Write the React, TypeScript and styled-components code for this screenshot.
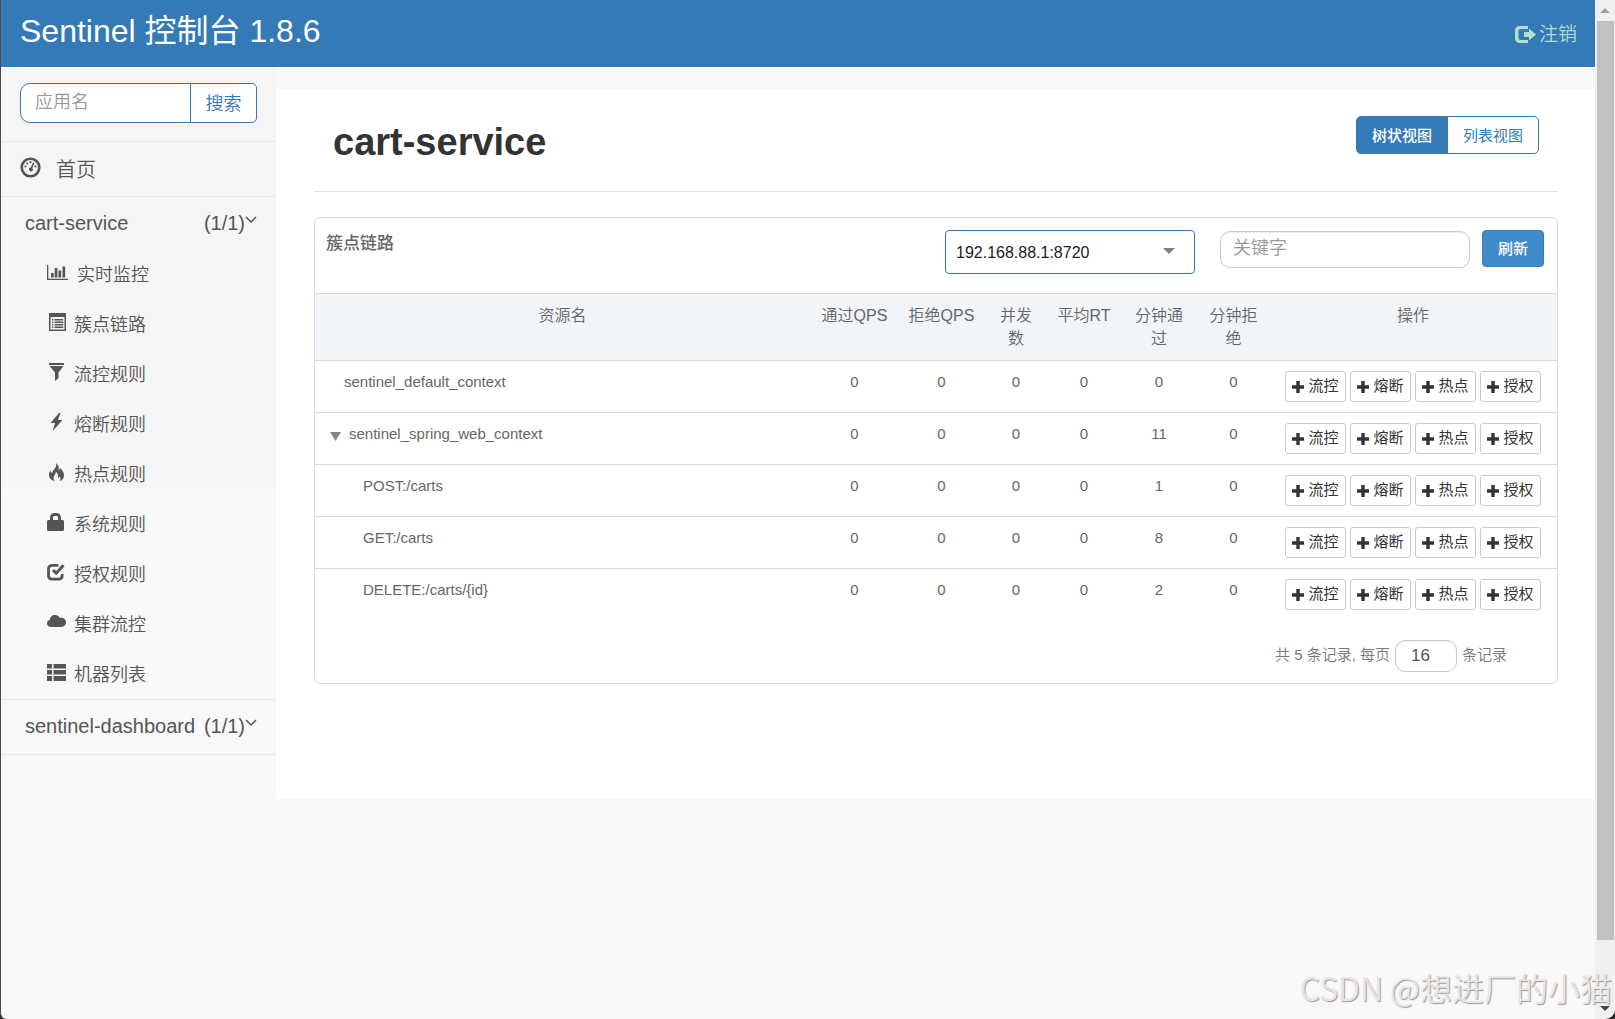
import React from 'react';
import styled, { createGlobalStyle } from 'styled-components';

const GlobalStyle = createGlobalStyle`
  *, *::before, *::after { box-sizing: border-box; }
  html { background: #2b2b2b; }
  body {
    margin: 0;
    font-family: "Liberation Sans", "Noto Sans CJK SC", sans-serif;
    font-weight: 350;
    color: #555;
  }
  button, input, select { font: inherit; color: inherit; margin: 0; }
  a { color: inherit; text-decoration: none; }
  ul { list-style: none; margin: 0; padding: 0; }
`;

/* ---------- frame ---------- */

const Frame = styled.div`
  position: relative;
  display: grid;
  grid-template-columns: minmax(0, 1fr) 20px;
  min-height: 100vh;
  border-left: 1px solid #4a4a4a;
  border-radius: 0 0 10px 6px;
  overflow: hidden;
  background: #f8f8f8;
`;

const ScrollTrack = styled.div`
  display: flex;
  flex-direction: column;
  align-items: center;
  background: #f0f0f0;
`;

const ScrollArrow = styled.span<{ $down?: boolean }>`
  display: flex;
  align-items: center;
  justify-content: center;
  height: 21px;
  &::before {
    content: "";
    border: 5px solid transparent;
    border-top: ${p => (p.$down ? '5px solid #444' : '0')};
    border-bottom: ${p => (p.$down ? '0' : '5px solid #a0a0a0')};
  }
`;

const ScrollThumb = styled.span`
  width: 17px;
  flex: 919;
  background: #c1c1c1;
`;

const ScrollRest = styled.span`
  flex: 58;
`;

const Watermark = styled.p`
  position: absolute;
  right: 3px;
  bottom: 8px;
  margin: 0;
  font-family: "Noto Sans CJK SC", sans-serif;
  font-size: 32px;
  line-height: 48px;
  color: #e6e6e6;
  text-shadow: 1px 1px 1px #999;
  white-space: nowrap;
  pointer-events: none;
`;

/* ---------- top bar ---------- */

const TopBar = styled.header`
  display: flex;
  justify-content: space-between;
  height: 67px;
  padding: 0 18px 0 19px;
  background: #337ab7;
`;

const Brand = styled.a`
  font-size: 32px;
  line-height: 62px;
  color: #fff;
  font-weight: 400;
`;

const Logout = styled.a`
  display: flex;
  align-items: center;
  gap: 3px;
  padding-top: 3px;
  font-size: 19px;
  line-height: 64px;
  color: #b2dfcb;
`;

/* ---------- sidebar ---------- */

const Columns = styled.div`
  display: grid;
  grid-template-columns: 275px minmax(0, 1fr);
  align-items: start;
`;

const Sidebar = styled.nav`
  background: linear-gradient(#f5f5f5 422px, #f8f8f8 422px);
`;

const SearchForm = styled.form`
  display: flex;
  padding: 16px 19px 18px;
  border-bottom: 1px solid #e7e7e7;
  font-size: 18px;
`;

const AppInput = styled.input`
  flex: 1;
  min-width: 0;
  height: 40px;
  padding: 0 14px 2px;
  border: 1px solid #337ab7;
  border-radius: 10px 0 0 10px;
  background: #fff;
  outline: 0;
  &::placeholder { color: #999; opacity: 1; }
`;

const SearchButton = styled.button`
  width: 67px;
  height: 40px;
  margin-left: -1px;
  padding: 0 0 3px;
  border: 1px solid #337ab7;
  border-radius: 0 5px 5px 0;
  background: #fff;
  color: #337ab7;
`;

const HomeLink = styled.a`
  display: flex;
  align-items: center;
  gap: 15px;
  height: 55px;
  padding: 0 0 2px 19px;
  border-bottom: 1px solid #e7e7e7;
  font-size: 20px;
`;

const AppRow = styled.a`
  display: flex;
  align-items: center;
  height: 54px;
  padding: 0 19px 2px 24px;
  font-size: 20px;
`;

const AppCount = styled.span`
  margin-left: auto;
`;

const Group = styled.section`
  border-bottom: 1px solid #e7e7e7;
`;

const MenuList = styled.ul`
  margin-top: -2px;
`;

const MenuLink = styled.a`
  display: flex;
  align-items: center;
  gap: 8px;
  height: 50px;
  padding: 0 0 2px 46px;
  font-size: 18px;
  svg { flex: none; margin-bottom: 3px; }
`;

/* ---------- content ---------- */

const Content = styled.main`
  margin-top: 22px;
  min-height: 710px;
  padding: 0 37px 0 38px;
  background: #fff;
`;

const Heading = styled.div`
  display: flex;
  justify-content: space-between;
  align-items: flex-start;
  padding: 27px 19px 23px;
  border-bottom: 1px solid #e3e3e3;
`;

const Title = styled.h1`
  margin: 0;
  font-size: 38px;
  line-height: 52px;
  font-weight: 700;
  color: #333;
`;

const ViewSwitch = styled.div`
  display: flex;
`;

const ViewButton = styled.button<{ $active?: boolean }>`
  width: 92px;
  height: 38px;
  margin-left: ${p => (p.$active ? '0' : '-1px')};
  padding: 0 0 2px;
  border: 1px solid #337ab7;
  border-radius: ${p => (p.$active ? '5px 0 0 5px' : '0 5px 5px 0')};
  background: ${p => (p.$active ? '#337ab7' : '#fff')};
  color: ${p => (p.$active ? '#fff' : '#337ab7')};
  font-weight: ${p => (p.$active ? 500 : 400)};
  font-size: 15px;
`;

const Card = styled.section`
  margin-top: 25px;
  border: 1px solid #d9d9d9;
  border-radius: 6px;
`;

const CardHead = styled.div`
  display: flex;
  align-items: flex-start;
  height: 75px;
  padding: 12px 13px 0 11px;
`;

const CardTitle = styled.h2`
  margin: 0 auto 0 0;
  font-size: 17px;
  line-height: 27px;
  font-weight: 500;
  color: #666;
`;

const SelectBox = styled.label`
  position: relative;
  margin-right: 25px;
  &::after {
    content: "";
    position: absolute;
    right: 20px;
    top: 18px;
    border: 6px solid transparent;
    border-top-color: #808080;
    border-bottom: 0;
    pointer-events: none;
  }
`;

const MachineSelect = styled.select`
  appearance: none;
  display: block;
  width: 250px;
  height: 44px;
  padding: 0 10px;
  border: 1px solid #337ab7;
  border-radius: 4px;
  background: #fff;
  font-size: 16px;
  color: #222;
`;

const KeywordInput = styled.input`
  width: 250px;
  height: 37px;
  margin: 1px 12px 0 0;
  padding: 0 12px 2px;
  border: 1px solid #ccc;
  border-radius: 10px;
  box-shadow: inset 0 1px 1px rgba(0, 0, 0, 0.075);
  background: #fff;
  font-size: 18px;
  outline: 0;
  &::placeholder { color: #999; opacity: 1; }
`;

const RefreshButton = styled.button`
  width: 62px;
  height: 37px;
  padding: 0 0 2px;
  border: 1px solid #357ebd;
  border-radius: 4px;
  background: #428bca;
  color: #fff;
  font-size: 15px;
  font-weight: 500;
`;

const Table = styled.table`
  width: 100%;
  table-layout: fixed;
  border-collapse: separate;
  border-spacing: 0;
  color: #666;
`;

const Th = styled.th<{ $width?: number; $oneLine?: boolean }>`
  width: ${p => (p.$width ? `${p.$width}px` : 'auto')};
  padding: 10px ${p => (p.$oneLine ? '0' : '10px')};
  border-top: 1px solid #d9d9d9;
  background: #f1f4f8;
  font-size: 16px;
  line-height: 23px;
  font-weight: 350;
  text-align: center;
  vertical-align: top;
  white-space: ${p => (p.$oneLine ? 'nowrap' : 'normal')};
`;

const Td = styled.td`
  padding: 10px 0;
  border-top: 1px solid #d9d9d9;
  font-size: 15px;
  line-height: 22px;
  text-align: center;
  vertical-align: top;
`;

const NameCell = styled(Td)<{ $indent: number }>`
  padding-left: ${p => p.$indent}px;
  text-align: left;
`;

const TreeToggle = styled.button`
  display: inline-block;
  width: 11px;
  height: 9px;
  margin-right: 8px;
  padding: 0;
  border: 0;
  background: #888;
  clip-path: polygon(0 0, 100% 0, 50% 100%);
  vertical-align: -2px;
`;

const Actions = styled.div`
  display: flex;
  justify-content: flex-end;
  gap: 4px;
  padding-right: 16px;
`;

const ActionButton = styled.button`
  display: flex;
  align-items: center;
  justify-content: center;
  gap: 4px;
  width: 61px;
  height: 31px;
  padding: 0;
  border: 1px solid #ccc;
  border-radius: 3px;
  background: #fff;
  color: #333;
  font-size: 15px;
  font-weight: 400;
`;

const ActionLabel = styled.span`
  padding-bottom: 1px;
`;

const Pager = styled.div`
  display: flex;
  justify-content: flex-end;
  align-items: center;
  gap: 5px;
  padding: 20px 50px 11px 0;
  font-size: 15px;
  line-height: 30px;
  color: #777;
`;

const PagerText = styled.span`
  height: 32px;
`;

const PageSize = styled.input`
  width: 62px;
  height: 32px;
  padding: 0 15px;
  border: 1px solid #ccc;
  border-radius: 10px;
  box-shadow: inset 0 1px 1px rgba(0, 0, 0, 0.075);
  background: #fff;
  font-size: 17px;
  color: #555;
  outline: 0;
`;

/* ---------- icons ---------- */

const icons: Record<string, React.ReactNode> = {
  list: (
    <path fillRule="evenodd" d="M2 0h17v18H2zM3.500 4v12.500h14V4zM5 6h1.300v1.500H5zM7.500 6h8.700v1.500H7.500zM5 8.500h1.300V10H5zM7.500 8.500h8.700V10H7.500zM5 11h1.300v1.500H5zM7.500 11h8.700v1.500H7.500zM5 13.500h1.300V15H5zM7.500 13.500h8.700V15H7.500z" />
  ),
  filter: <path d="M2 0h15v2H2zM2.500 3h14L11.500 9.500V15l-3.500 3V9.500z" />,
  flash: <path d="M12 0 3.500 10h4.600L5.700 18l9.800-11h-4.600L13.500 0z" />,
  fire: (
    <path d="M9 0c2.600 2.200 3.400 4.600 2.500 7.300.9-.4 1.300-1.200 1.400-2.300 2.400 2 4.100 4.400 4.100 7.400 0 2.700-1.500 4.600-4.300 5.600 1-1.600 1.100-3.200 0-4.800-.3 1.200-.8 1.700-1.700 2 .5-2.800-.2-5-2.100-6.400-.1 2.500-2.300 3.900-2.300 6.200 0 1.100.3 2 1 3C4.400 17.200 2 15.200 2 12.200c0-2 .6-3.500 1.600-5 .2 1.700.7 2.500 1.600 3C5.500 6.500 10.500 5 9 0z" />
  ),
  lock: (
    <path fillRule="evenodd" d="M3 7V4.500C3 2 5 0 7.500 0h2C12 0 14 2 14 4.500V7h1.500c.8 0 1.500.6 1.500 1.400v8.100c0 .9-.7 1.500-1.500 1.500h-14C.7 18 0 17.400 0 16.500V8.400C0 7.600.7 7 1.500 7zm3 0h5V4.500C11 3.600 10.400 3 9.500 3h-2C6.600 3 6 3.600 6 4.500z" />
  ),
  check: (
    <>
      <path fill="none" stroke="currentColor" strokeWidth="2.800" d="M11.500 2.400H5.200C3 2.400 1.500 3.800 1.500 6v6.500c0 2.200 1.500 3.600 3.700 3.600h6.300c2.200 0 3.700-1.400 3.700-3.600V11" />
      <path fill="none" stroke="currentColor" strokeWidth="3" d="m6 7 3.200 3.200L16.500 2.300" />
    </>
  ),
  cloud: (
    <path d="M4 14c-2.300 0-4-1.500-4-3.600 0-2 1.300-3.300 3-3.700C3 4.100 5.200 2 8 2c2.200 0 4 1.200 4.800 3 .5-.2.900-.3 1.400-.3C16.800 4.700 19 6.700 19 9.300S17 14 14.400 14z" />
  ),
  rows: <path d="M0 1h5v4.500H0zM6.500 1H19v4.500H6.500zM0 7h5v4.500H0zM6.500 7H19v4.500H6.500zM0 13h5v5H0zM6.500 13H19v5H6.500z" />,
};

function MenuIcon({ name }: { name: string }) {
  if (name === 'chart') {
    return (
      <svg width="22" height="18" viewBox="0 0 22 18" fill="currentColor" aria-hidden="true">
        <path d="M0 2h1.300v13.700H21V17H0zM4 10h2.700v4.500H4zM7.700 5h2.700v9.500H7.700zM11.500 7.500h2.700v7h-2.700zM15.500 3.500h2.700v11h-2.700z" />
      </svg>
    );
  }
  return (
    <svg width="19" height="18" viewBox="0 0 19 18" fill="currentColor" aria-hidden="true">
      {icons[name]}
    </svg>
  );
}

const DashboardIcon = () => (
  <svg width="21" height="21" viewBox="0 0 21 21" fill="currentColor" style={{ marginBottom: 2 }} aria-hidden="true">
    <circle cx="10.500" cy="10.500" r="8.800" fill="none" stroke="currentColor" strokeWidth="2.600" />
    <circle cx="5.500" cy="9.500" r="1.100" />
    <circle cx="7.300" cy="6.500" r="1.100" />
    <circle cx="10.500" cy="5.200" r="1.100" />
    <circle cx="15.500" cy="9.500" r="1.100" />
    <path d="m13.200 5.200 1.300.6-2.200 5.400a1.900 1.900 0 1 1-1.600-.6z" />
  </svg>
);

const ChevronIcon = () => (
  <svg width="12" height="8" viewBox="0 0 12 8" fill="none" stroke="currentColor" strokeWidth="1.500" style={{ marginBottom: 6 }} aria-hidden="true">
    <path d="m1 1 5 5 5-5" />
  </svg>
);

const LogoutIcon = () => (
  <svg width="21" height="18" viewBox="0 0 21 18" fill="currentColor" aria-hidden="true">
    <path d="M13 0v3H5.500C4.200 3 3.500 3.700 3.500 5v7c0 1.300.7 2 2 2H13v3H5C2 17 0 15 0 12V5c0-3 2-5 5-5z" />
    <path d="M14 2.500 21 8.500l-7 6V11H9V6h5z" />
  </svg>
);

const PlusIcon = () => (
  <svg width="12" height="12" viewBox="0 0 12 12" fill="currentColor" aria-hidden="true">
    <path d="M4.300 0h3.400v4.300H12v3.400H7.700V12H4.300V7.700H0V4.300h4.300z" />
  </svg>
);

/* ---------- data ---------- */

const menu = [
  ['chart', '实时监控'],
  ['list', '簇点链路'],
  ['filter', '流控规则'],
  ['flash', '熔断规则'],
  ['fire', '热点规则'],
  ['lock', '系统规则'],
  ['check', '授权规则'],
  ['cloud', '集群流控'],
  ['rows', '机器列表'],
];

const resources = [
  { name: 'sentinel_default_context', indent: 29, values: [0, 0, 0, 0, 0, 0] },
  { name: 'sentinel_spring_web_context', indent: 15, open: true, values: [0, 0, 0, 0, 11, 0] },
  { name: 'POST:/carts', indent: 48, values: [0, 0, 0, 0, 1, 0] },
  { name: 'GET:/carts', indent: 48, values: [0, 0, 0, 0, 8, 0] },
  { name: 'DELETE:/carts/{id}', indent: 48, values: [0, 0, 0, 0, 2, 0] },
];

const actions = ['流控', '熔断', '热点', '授权'];

export default function App() {
  return (
    <>
      <GlobalStyle />
      <Frame>
        <div>
          <TopBar>
            <Brand href="#">Sentinel 控制台 1.8.6</Brand>
            <Logout href="#"><LogoutIcon />注销</Logout>
          </TopBar>
          <Columns>
            <Sidebar>
              <SearchForm onSubmit={e => e.preventDefault()}>
                <AppInput placeholder="应用名" aria-label="应用名" />
                <SearchButton type="submit">搜索</SearchButton>
              </SearchForm>
              <HomeLink href="#"><DashboardIcon />首页</HomeLink>
              <Group>
                <AppRow href="#">cart-service<AppCount>(1/1)</AppCount><ChevronIcon /></AppRow>
                <MenuList>
                  {menu.map(([icon, label]) => (
                    <li key={label}>
                      <MenuLink href="#"><MenuIcon name={icon} />{label}</MenuLink>
                    </li>
                  ))}
                </MenuList>
              </Group>
              <Group>
                <AppRow href="#">sentinel-dashboard<AppCount>(1/1)</AppCount><ChevronIcon /></AppRow>
              </Group>
            </Sidebar>
            <Content>
              <Heading>
                <Title>cart-service</Title>
                <ViewSwitch>
                  <ViewButton type="button" $active>树状视图</ViewButton>
                  <ViewButton type="button">列表视图</ViewButton>
                </ViewSwitch>
              </Heading>
              <Card>
                <CardHead>
                  <CardTitle>簇点链路</CardTitle>
                  <SelectBox>
                    <MachineSelect aria-label="机器">
                      <option>192.168.88.1:8720</option>
                    </MachineSelect>
                  </SelectBox>
                  <KeywordInput placeholder="关键字" aria-label="关键字" />
                  <RefreshButton type="button">刷新</RefreshButton>
                </CardHead>
                <Table>
                  <thead>
                    <tr>
                      <Th>资源名</Th>
                      <Th $width={89} $oneLine>通过QPS</Th>
                      <Th $width={85} $oneLine>拒绝QPS</Th>
                      <Th $width={64}>并发数</Th>
                      <Th $width={72} $oneLine>平均RT</Th>
                      <Th $width={78}>分钟通过</Th>
                      <Th $width={71}>分钟拒绝</Th>
                      <Th $width={288}>操作</Th>
                    </tr>
                  </thead>
                  <tbody>
                    {resources.map(r => (
                      <tr key={r.name}>
                        <NameCell $indent={r.indent}>
                          {r.open && <TreeToggle type="button" aria-label="收起" />}
                          {r.name}
                        </NameCell>
                        {r.values.map((v, i) => <Td key={i}>{v}</Td>)}
                        <Td>
                          <Actions>
                            {actions.map(a => (
                              <ActionButton key={a} type="button">
                                <PlusIcon />
                                <ActionLabel>{a}</ActionLabel>
                              </ActionButton>
                            ))}
                          </Actions>
                        </Td>
                      </tr>
                    ))}
                  </tbody>
                </Table>
                <Pager>
                  <PagerText>共 5 条记录, 每页</PagerText>
                  <PageSize defaultValue="16" aria-label="每页条数" />
                  <PagerText>条记录</PagerText>
                </Pager>
              </Card>
            </Content>
          </Columns>
        </div>
        <ScrollTrack aria-hidden="true">
          <ScrollArrow />
          <ScrollThumb />
          <ScrollRest />
          <ScrollArrow $down />
        </ScrollTrack>
        <Watermark>CSDN @想进厂的小猫</Watermark>
      </Frame>
    </>
  );
}
